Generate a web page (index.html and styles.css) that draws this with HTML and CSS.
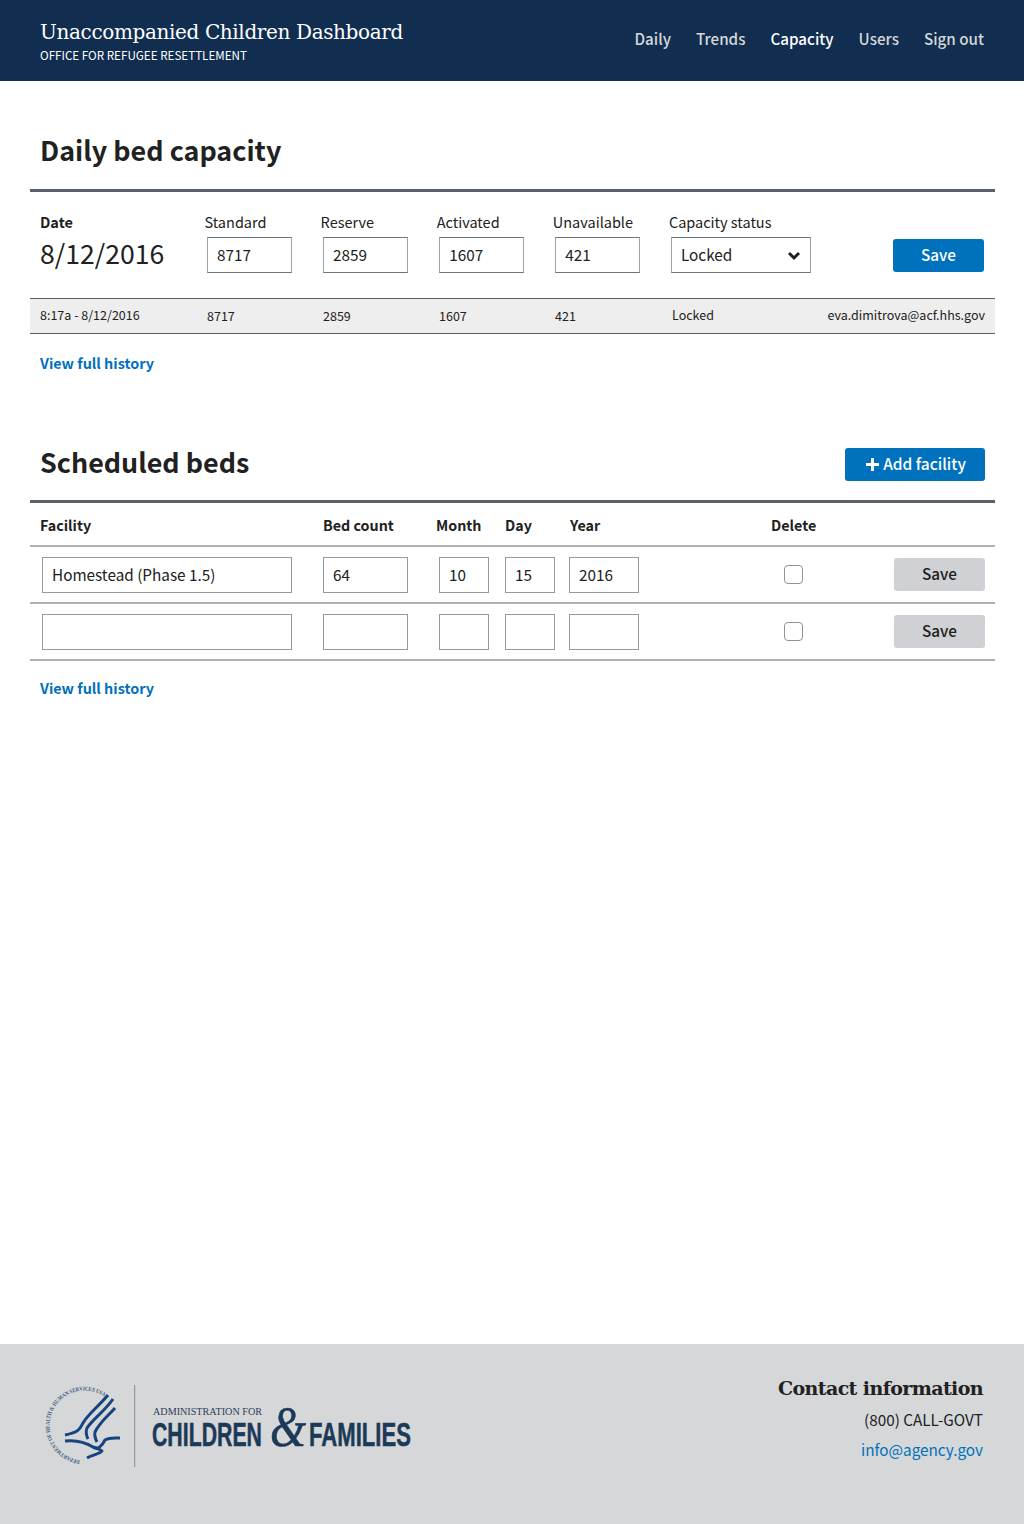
FILE: index.html
```html
<!DOCTYPE html>
<html lang="en">
<head>
    <meta charset="UTF-8">
    <meta name="viewport" content="width=device-width, initial-scale=1.0">
    <title>Daily bed capacity</title>
    <link rel="stylesheet" href="styles.css">
</head>
<body>
    <!-- Header -->
    <header class="site-header">
        <div class="brand">
            <div class="brand-title">Unaccompanied Children Dashboard</div>
            <div class="brand-sub">OFFICE FOR REFUGEE RESETTLEMENT</div>
        </div>
        <nav class="site-nav">
            <a href="#">Daily</a>
            <a href="#">Trends</a>
            <a href="#" class="active">Capacity</a>
            <a href="#">Users</a>
            <a href="#">Sign out</a>
        </nav>
    </header>

    <main class="content">
        <!-- Daily capacity -->
        <section class="daily">
            <div class="section-head">
                <h1>Daily bed capacity</h1>
            </div>
            <form class="capacity-form">
                <div class="date-cell">
                    <label class="strong">Date</label>
                    <div class="date-value">8/12/2016</div>
                </div>
                <div class="field">
                    <label>Standard</label>
                    <input type="text" value="8717">
                </div>
                <div class="field">
                    <label>Reserve</label>
                    <input type="text" value="2859">
                </div>
                <div class="field">
                    <label>Activated</label>
                    <input type="text" value="1607">
                </div>
                <div class="field">
                    <label>Unavailable</label>
                    <input type="text" value="421">
                </div>
                <div class="field">
                    <label>Capacity status</label>
                    <div class="select-wrap">
                        <select>
                            <option>Locked</option>
                        </select>
                        <svg class="chevron" viewBox="0 0 14 10" width="14" height="10"><path d="M2 2l5 5 5-5" fill="none" stroke="#212121" stroke-width="3"/></svg>
                    </div>
                </div>
                <button type="button" class="btn btn-primary btn-save">Save</button>
            </form>
            <div class="history-row">
                <span>8:17a - 8/12/2016</span>
                <span class="num">8717</span>
                <span class="num">2859</span>
                <span class="num">1607</span>
                <span class="num">421</span>
                <span class="status">Locked</span>
                <span class="email">eva.dimitrova@acf.hhs.gov</span>
            </div>
            <a href="#" class="history-link">View full history</a>
        </section>

        <!-- Scheduled beds -->
        <section class="scheduled">
            <div class="section-head">
                <h1>Scheduled beds</h1>
                <button type="button" class="btn btn-primary btn-add">
                    <svg viewBox="0 0 13 13" width="13" height="13"><path d="M5 0h3v5h5v3H8v5H5V8H0V5h5z" fill="#fff"/></svg>
                    Add facility
                </button>
            </div>
            <div class="bed-row bed-header">
                <span>Facility</span>
                <span>Bed count</span>
                <span>Month</span>
                <span>Day</span>
                <span>Year</span>
                <span>Delete</span>
            </div>
            <div class="bed-row">
                <input type="text" class="in-facility" value="Homestead (Phase 1.5)">
                <input type="text" class="in-count" value="64">
                <input type="text" class="in-month" value="10">
                <input type="text" class="in-day" value="15">
                <input type="text" class="in-year" value="2016">
                <input type="checkbox" class="in-delete">
                <button type="button" class="btn btn-grey">Save</button>
            </div>
            <div class="bed-row">
                <input type="text" class="in-facility">
                <input type="text" class="in-count">
                <input type="text" class="in-month">
                <input type="text" class="in-day">
                <input type="text" class="in-year">
                <input type="checkbox" class="in-delete">
                <button type="button" class="btn btn-grey">Save</button>
            </div>
            <a href="#" class="history-link">View full history</a>
        </section>
    </main>

    <!-- Footer -->
    <footer class="site-footer">
        <svg class="acf-logo" viewBox="0 0 400 110" width="400" height="110" role="img" aria-label="Administration for Children and Families">
            <defs>
                <path id="sealArc" d="M50 90.2A35 35 0 1 1 74 26.4"/>
            </defs>
            <text class="seal-text"><textPath href="#sealArc" textLength="126" lengthAdjust="spacingAndGlyphs">DEPARTMENT OF HEALTH &amp; HUMAN SERVICES USA</textPath></text>
            <g class="eagle">
                <path d="M78 25C68 37 58 44 53 53C50 59 49 62 35 65"/>
                <path d="M83 29C74 42 62 50 57 58C55 63 57 67 58 69"/>
                <path d="M85 38C78 46 70 52 65 62C64 66 66 70 67 72"/>
                <path d="M35 71C44 70 55 72 63 77C68 80 72 76 75 70C80 67 85 68 90 68"/>
                <path d="M63 77C68 79 72 80 72 81C70 84 62 85 57 88"/>
            </g>
            <path class="logo-rule" d="M104.7 15V97"/>
            <text class="acf-small" x="123" y="44.5" textLength="109" lengthAdjust="spacingAndGlyphs">ADMINISTRATION FOR</text>
            <text class="acf-big" transform="translate(122 76) scale(0.655 1)">CHILDREN</text>
            <text class="acf-amp" transform="translate(240 76) scale(0.8 1)">&amp;</text>
            <text class="acf-big" transform="translate(279 76) scale(0.68 1)">FAMILIES</text>
        </svg>
        <div class="contact">
            <div class="contact-title">Contact information</div>
            <div class="contact-line">(800) CALL-GOVT</div>
            <a href="#" class="contact-line contact-mail">info@agency.gov</a>
        </div>
    </footer>
</body>
</html>
```
FILE: styles.css
```css
body {
    font-family: "Noto Sans CJK SC", "Source Sans Pro", "Open Sans", sans-serif;
    font-size: 15.3px;
    color: #212121;
    margin: 0;
    padding: 0;
    background-color: #fff;
    min-height: 1524px;
    display: flex;
    flex-direction: column;
}

a {
    text-decoration: none;
}

/* Header */
.site-header {
    background-color: #112e51;
    height: 81px;
    box-sizing: border-box;
    padding: 0 40px;
    display: flex;
    justify-content: space-between;
    align-items: flex-start;
}

.brand-title {
    font-family: "DejaVu Serif", serif;
    font-size: 20px;
    line-height: 28px;
    color: #fff;
    margin-top: 18px;
    letter-spacing: -0.37px;
}

.brand-sub {
    font-size: 11.65px;
    line-height: 18px;
    color: #fff;
}

.site-nav {
    display: flex;
    gap: 25px;
    margin-top: 25px;
}

.site-nav a {
    font-size: 15.2px;
    line-height: 26px;
    font-weight: 500;
    color: #d6d7d9;
}

.site-nav a.active {
    color: #fff;
}

/* Sections */
.content {
    flex: 1;
    padding: 0 29px 0 30px;
}

.section-head {
    display: flex;
    justify-content: space-between;
    align-items: center;
    padding: 0 10px;
    border-bottom: 3px solid #5b616b;
}

.section-head h1 {
    font-size: 26.9px;
    line-height: 40px;
    font-weight: 700;
    margin: -2px 0 0;
}

.daily .section-head {
    height: 111px;
    box-sizing: border-box;
    padding-top: 29px;
}

.daily .section-head h1 {
    margin-top: 0;
}

.scheduled {
    margin-top: 50px;
}

.scheduled .section-head {
    height: 78px;
    box-sizing: border-box;
    padding-top: 0;
}

/* Form controls */
input[type="text"],
select {
    box-sizing: border-box;
    height: 36px;
    border: 1px solid #a0a3a9;
    border-top-color: #6f747d;
    border-bottom-color: #6f747d;
    border-radius: 0;
    background: #fff;
    font-family: inherit;
    font-size: 15.3px;
    color: #212121;
    padding: 0 9px 2px;
    margin: 0;
}

.bed-row input[type="text"] {
    border-color: #969aa0;
}

.capacity-form {
    display: grid;
    grid-template-columns: 164px 116.1px 116.1px 116.1px 116.1px 1fr auto;
    align-items: start;
    padding: 20px 11px 0 10px;
    height: 106px;
    box-sizing: border-box;
}

.field label,
.date-cell label {
    display: block;
    font-size: 14.5px;
    line-height: 20px;
    margin-bottom: 5px;
}

.field label {
    margin-left: 0.5px;
}

.date-cell label.strong {
    font-weight: 700;
    margin-bottom: 5px;
}

.date-value {
    font-size: 26.6px;
    line-height: 32px;
}

.field input {
    width: 85px;
    margin-left: 3px;
    display: block;
}

.select-wrap {
    position: relative;
    width: 140px;
    margin-left: 2.6px;
}

.select-wrap select {
    width: 100%;
    appearance: none;
    -webkit-appearance: none;
    display: block;
}

.chevron {
    position: absolute;
    right: 10px;
    top: 14px;
}

/* Buttons */
.btn {
    font-family: inherit;
    font-size: 15.3px;
    font-weight: 500;
    height: 33px;
    border: none;
    border-radius: 3px;
    padding: 0 0 4px;
    cursor: pointer;
}

.btn-primary {
    background-color: #0071bc;
    color: #fff;
}

.btn-grey {
    background-color: #d0d1d4;
    color: #212121;
    width: 91px;
    justify-self: end;
}

.btn-save {
    width: 91px;
    margin-top: 27px;
}

.btn-add {
    width: 140px;
    display: flex;
    align-items: center;
    justify-content: center;
    gap: 4px;
    margin-top: 4px;
    padding-left: 2px;
    font-size: 15.5px;
}

.btn-add svg {
    margin-top: 3px;
}

/* History row */
.history-row {
    display: grid;
    grid-template-columns: 167px 116px 116px 116px 117px 1fr auto;
    align-items: center;
    height: 36px;
    box-sizing: border-box;
    padding: 0 10px 4px;
    background-color: #eee;
    border-top: 1px solid #5b616b;
    border-bottom: 1px solid #5b616b;
    font-size: 12.5px;
}

.history-row .num {
    padding-top: 2px;
}

.history-link {
    display: inline-block;
    margin: 17px 0 0 10px;
    font-size: 14.4px;
    line-height: 24px;
    font-weight: 700;
    color: #0071bc;
}

.scheduled .history-link {
    margin-top: 15px;
}

/* Scheduled table */
.bed-row {
    display: grid;
    grid-template-columns: 283px 113px 69px 65px 201px 45px 1fr;
    align-items: center;
    height: 57px;
    box-sizing: border-box;
    padding: 0 10px;
    border-bottom: 2px solid #aeb0b5;
}

.bed-header {
    height: 44px;
    font-size: 14.3px;
    font-weight: 700;
}

.in-facility {
    width: 250px;
    margin-left: 2px !important;
}

.in-count {
    width: 85px;
}

.in-month {
    width: 50px;
    margin-left: 3px !important;
}

.in-day {
    width: 50px;
}

.in-year {
    width: 70px;
    margin-left: -1px !important;
}

.in-delete {
    appearance: none;
    -webkit-appearance: none;
    width: 19px;
    height: 19px;
    margin: 0;
    justify-self: center;
    border: 1px solid #8f9298;
    border-radius: 4px;
    background: #fff;
}

/* Footer */
.site-footer {
    background-color: #d6d7d9;
    height: 180px;
    box-sizing: border-box;
    padding: 26px 41px 0 30px;
    display: flex;
    justify-content: space-between;
    align-items: flex-start;
}

.seal-text {
    font-family: "Liberation Serif", serif;
    font-size: 5.8px;
    font-weight: 700;
    fill: #3c5a80;
}

.eagle path {
    fill: none;
    stroke: #17437f;
    stroke-width: 3;
}

.logo-rule {
    stroke: #7f8fa0;
    stroke-width: 1;
}

.acf-small {
    font-family: "Liberation Serif", serif;
    font-size: 10px;
    fill: #2a4058;
}

.acf-big {
    font-family: "Liberation Sans", sans-serif;
    font-size: 32.5px;
    font-weight: 700;
    fill: #1c3a57;
    stroke: #1c3a57;
    stroke-width: 0.5;
}

.acf-amp {
    font-family: "Liberation Serif", serif;
    font-style: italic;
    font-size: 58px;
    fill: #1c3a57;
    stroke: #1c3a57;
    stroke-width: 0.6;
}

.contact {
    text-align: right;
}

.contact-title {
    font-family: "DejaVu Serif", serif;
    font-size: 19px;
    font-weight: 700;
    line-height: 28px;
    margin-top: 4px;
    letter-spacing: -0.6px;
}

.contact-line {
    display: block;
    font-size: 15.3px;
    line-height: 30px;
}

.contact-title + .contact-line {
    margin-top: 2px;
}

.contact-mail {
    color: #0071bc;
}
```
